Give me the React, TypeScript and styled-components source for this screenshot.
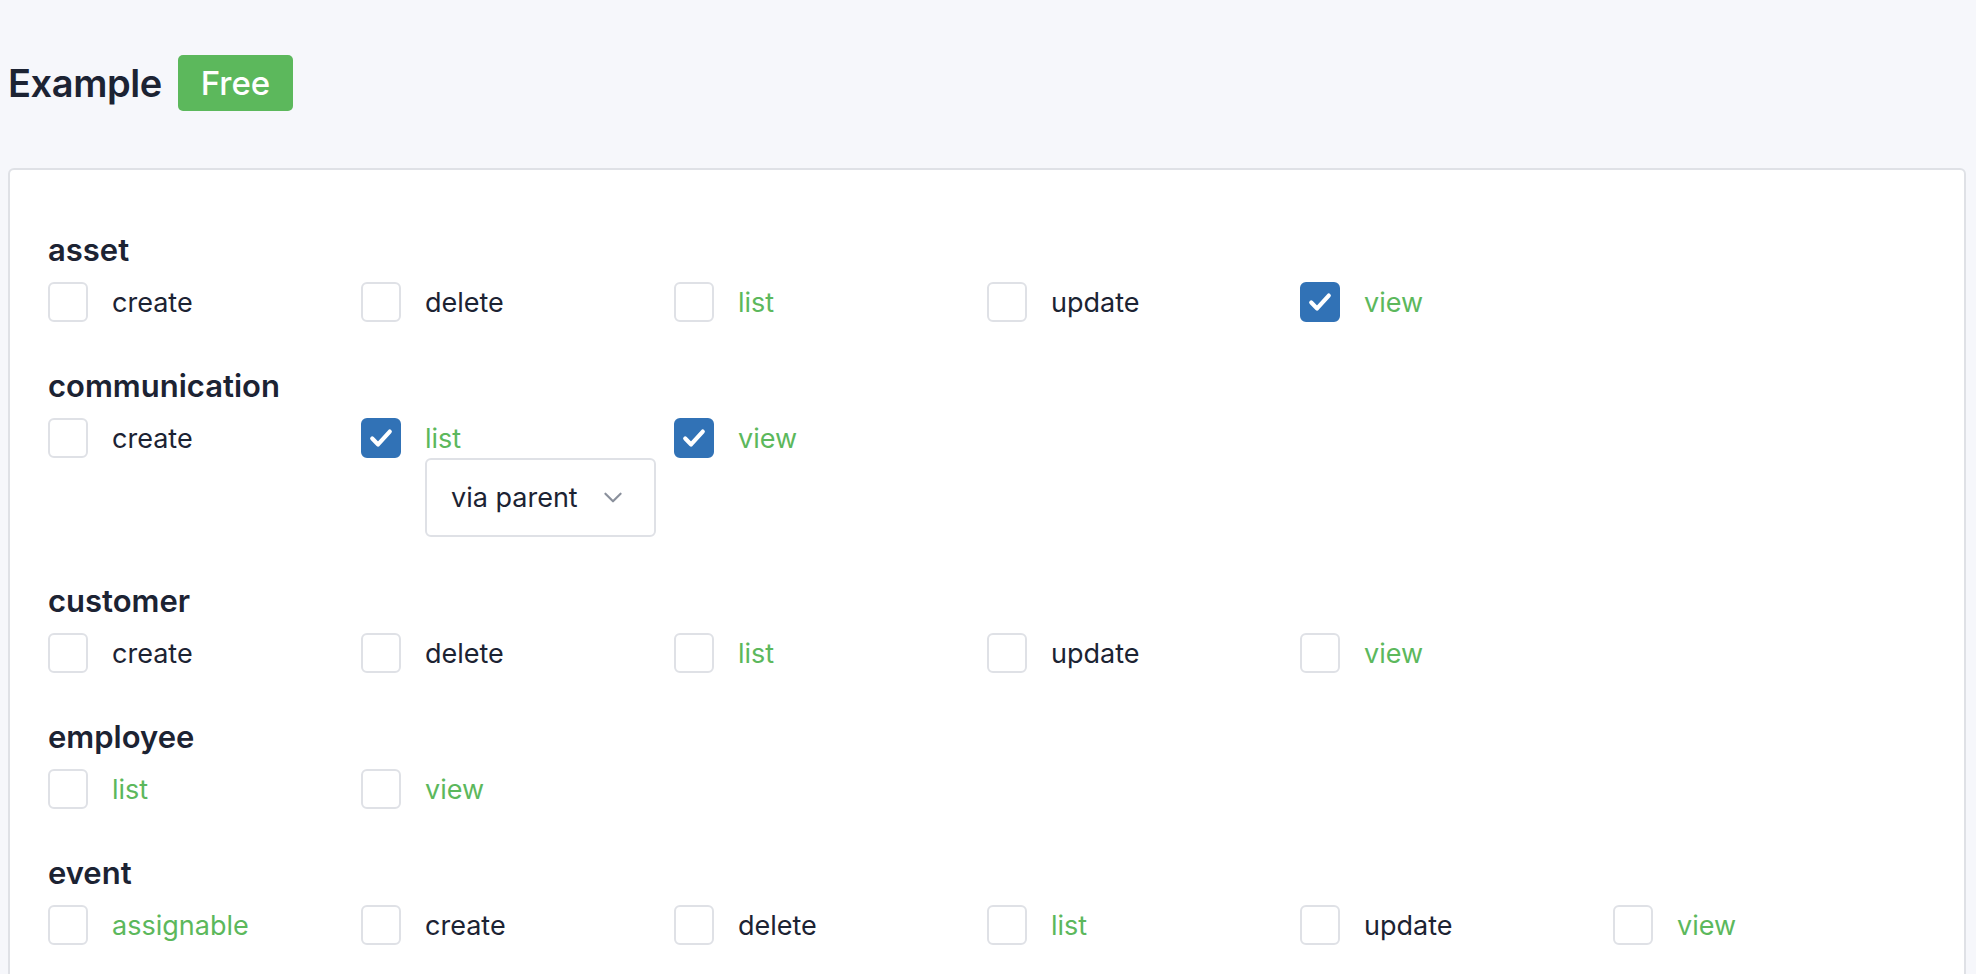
import React from "react";
import styled, { createGlobalStyle } from "styled-components";

const Global = createGlobalStyle`
  body { margin: 0; background: #f6f7fb; font-family: Inter, "Noto Sans", sans-serif; color: #1c2333; }
`;

const Page = styled.div`
  padding: 55px 10px 0 8px;
`;

const Header = styled.div`
  display: flex;
  align-items: center;
  gap: 16px;
  height: 56px;
  margin-bottom: 57px;
`;

const Title = styled.h1`
  margin: 0;
  font-size: 38px;
  font-weight: 600;
  letter-spacing: -0.4px;
`;

const Badge = styled.span`
  display: inline-flex;
  align-items: center;
  justify-content: center;
  width: 115px;
  height: 56px;
  border-radius: 5px;
  background: #5cb85c;
  color: #fff;
  font-size: 33px;
  font-weight: 500;
`;

const Card = styled.div`
  background: #fff;
  border: 2px solid #dfe1e6;
  border-radius: 6px;
  padding: 62px 38px 60px 38px;
  min-height: 700px;
`;

const Section = styled.div`
  margin-bottom: 46px;
`;

const Heading = styled.div`
  font-size: 31px;
  font-weight: 600;
  line-height: 36px;
  margin-bottom: 14px;
`;

const Grid = styled.div`
  display: grid;
  grid-template-columns: repeat(6, 313px);
`;

const Cell = styled.div`
  display: flex;
  flex-direction: column;
`;

const Item = styled.label`
  display: flex;
  align-items: center;
  gap: 24px;
  height: 40px;
`;

const Box = styled.span<{ $checked?: boolean }>`
  width: 40px;
  height: 40px;
  box-sizing: border-box;
  border-radius: 6px;
  border: 2px solid ${(p) => (p.$checked ? "#3172b6" : "#dfe1e6")};
  background: ${(p) => (p.$checked ? "#3172b6" : "#fff")};
  display: flex;
  align-items: center;
  justify-content: center;
`;

const Label = styled.span<{ $green?: boolean }>`
  font-size: 27px;
  color: ${(p) => (p.$green ? "#5cb85c" : "#1c2333")};
`;

const Select = styled.div`
  margin-left: 64px;
  width: 231px;
  height: 79px;
  box-sizing: border-box;
  border: 2px solid #dfe1e6;
  border-radius: 6px;
  display: flex;
  align-items: center;
  justify-content: space-between;
  padding: 0 28px 0 24px;
  font-size: 27px;
`;

type It = { l: string; g?: boolean; c?: boolean; sel?: boolean };
const data: { name: string; items: It[] }[] = [
  { name: "asset", items: [{ l: "create" }, { l: "delete" }, { l: "list", g: true }, { l: "update" }, { l: "view", g: true, c: true }] },
  { name: "communication", items: [{ l: "create" }, { l: "list", g: true, c: true, sel: true }, { l: "view", g: true, c: true }] },
  { name: "customer", items: [{ l: "create" }, { l: "delete" }, { l: "list", g: true }, { l: "update" }, { l: "view", g: true }] },
  { name: "employee", items: [{ l: "list", g: true }, { l: "view", g: true }] },
  { name: "event", items: [{ l: "assignable", g: true }, { l: "create" }, { l: "delete" }, { l: "list", g: true }, { l: "update" }, { l: "view", g: true }] },
];

export default function App() {
  return (
    <Page>
      <Global />
      <Header>
        <Title>Example</Title>
        <Badge>Free</Badge>
      </Header>
      <Card>
        {data.map((s) => (
          <Section key={s.name}>
            <Heading>{s.name}</Heading>
            <Grid>
              {s.items.map((it) => (
                <Cell key={it.l}>
                  <Item>
                    <Box $checked={it.c}>
                      {it.c && (
                        <svg width="28" height="28" viewBox="0 0 24 24" fill="none" stroke="#fff" strokeWidth="3.6" strokeLinecap="round" strokeLinejoin="round">
                          <path d="M4.5 12.5l5 5L19.5 6.5" />
                        </svg>
                      )}
                    </Box>
                    <Label $green={it.g}>{it.l}</Label>
                  </Item>
                  {it.sel && (
                    <Select>
                      <span>via parent</span>
                      <svg width="26" height="26" viewBox="0 0 24 24" fill="none" stroke="#8a909c" strokeWidth="2" strokeLinecap="round" strokeLinejoin="round">
                        <path d="M5 8l7 7 7-7" />
                      </svg>
                    </Select>
                  )}
                </Cell>
              ))}
            </Grid>
          </Section>
        ))}
      </Card>
    </Page>
  );
}
